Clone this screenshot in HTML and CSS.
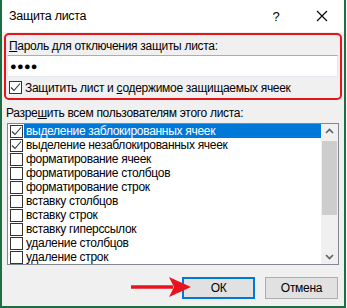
FILE: index.html
```html
<!DOCTYPE html>
<html lang="ru">
<head>
    <meta charset="UTF-8">
    <title>Защита листа</title>
    <link rel="stylesheet" href="styles.css">
</head>
<body>
    <div class="dialog">
        <div class="titlebar">
            <div class="title">Защита листа</div>
            <div class="help">?</div>
            <div class="close">
                <svg width="12" height="12" viewBox="0 0 12 12"><path d="M1 1L11 11M11 1L1 11" stroke="#000" stroke-width="1.1" fill="none"/></svg>
            </div>
        </div>

        <div class="content">
            <div class="protect-box">
                <div class="label"><u>П</u>ароль для отключения защиты листа:</div>
                <div class="password">&#9679;&#9679;&#9679;&#9679;</div>
                <div class="check-row">
                    <span class="box checked"><svg width="13" height="13" viewBox="0 0 13 13"><path d="M2 6.5L5 9.5L11 2.5" stroke="#333" stroke-width="1.1" fill="none"/></svg></span>
                    <span>Защитить лист и <u>с</u>одержимое защищаемых ячеек</span>
                </div>
            </div>

            <div class="label allow">Разре<u>ш</u>ить всем пользователям этого листа:</div>

            <div class="list">
                <div class="items">
                    <div class="item selected">
                        <span class="box"><svg width="13" height="13" viewBox="0 0 13 13"><path d="M2 6.5L5 9.5L11 2.5" stroke="#333" stroke-width="1.1" fill="none"/></svg></span>
                        <span class="text">выделение заблокированных ячеек</span>
                    </div>
                    <div class="item">
                        <span class="box"><svg width="13" height="13" viewBox="0 0 13 13"><path d="M2 6.5L5 9.5L11 2.5" stroke="#333" stroke-width="1.1" fill="none"/></svg></span>
                        <span class="text">выделение незаблокированных ячеек</span>
                    </div>
                    <div class="item"><span class="box"></span><span class="text">форматирование ячеек</span></div>
                    <div class="item"><span class="box"></span><span class="text">форматирование столбцов</span></div>
                    <div class="item"><span class="box"></span><span class="text">форматирование строк</span></div>
                    <div class="item"><span class="box"></span><span class="text">вставку столбцов</span></div>
                    <div class="item"><span class="box"></span><span class="text">вставку строк</span></div>
                    <div class="item"><span class="box"></span><span class="text">вставку гиперссылок</span></div>
                    <div class="item"><span class="box"></span><span class="text">удаление столбцов</span></div>
                    <div class="item"><span class="box"></span><span class="text">удаление строк</span></div>
                </div>
                <div class="scrollbar">
                    <svg class="arrow" width="17" height="14" viewBox="0 0 17 14"><path d="M5 9L8.5 5.5L12 9" stroke="#606060" stroke-width="1.6" fill="none"/></svg>
                    <div class="track"><div class="thumb"></div></div>
                    <svg class="arrow" width="17" height="14" viewBox="0 0 17 14"><path d="M5 5L8.5 8.5L12 5" stroke="#606060" stroke-width="1.6" fill="none"/></svg>
                </div>
            </div>

            <div class="buttons">
                <button class="btn default">ОК</button>
                <button class="btn">Отмена</button>
            </div>
        </div>

        <svg class="pointer" width="62" height="22" viewBox="0 0 62 22">
            <path d="M0 11H42" stroke="#e8141c" stroke-width="3.5"/>
            <path d="M38 1L60 11L38 21L43 11Z" fill="#e8141c"/>
        </svg>
    </div>
</body>
</html>
```

FILE: styles.css
```css
body {
    margin: 0;
    background: #fff;
    font-family: "Liberation Sans", Arial, sans-serif;
    font-size: 12px;
    letter-spacing: -0.3px;
    color: #000;
}

.dialog {
    position: relative;
    width: 346px;
    height: 308px;
    box-sizing: border-box;
    border-left: 2px solid #1d6f42;
    border-right: 2px solid #1d6f42;
    border-bottom: 2px solid #1d6f42;
    background: #f0f0f0;
    display: flex;
    flex-direction: column;
}

.titlebar {
    height: 32px;
    background: #fff;
    display: flex;
    align-items: center;
    flex-shrink: 0;
}

.title {
    flex: 1;
    padding-left: 7px;
    font-size: 12.5px;
}

.help {
    width: 20px;
    text-align: center;
    font-size: 13px;
    margin-right: 30px;
}

.close {
    width: 12px;
    height: 12px;
    margin-right: 16px;
}

.content {
    flex: 1;
    display: flex;
    flex-direction: column;
    padding: 1px 2px 0 2px;
}

.protect-box {
    border: 2px solid #e8141c;
    border-radius: 5px;
    padding: 2px 1px 0 1px;
    height: 61px;
}

.label {
    line-height: 18px;
    padding-left: 2px;
    white-space: nowrap;
}

.password {
    height: 22px;
    box-sizing: border-box;
    border: 1px solid #7a7a7a;
    border-color: #abadb3 #e3e9ef #e3e9ef #e3e9ef;
    background: #fff;
    margin-right: 1px;
    font-size: 11px;
    letter-spacing: 0.3px;
    line-height: 20px;
    padding-left: 2px;
}

.check-row {
    display: flex;
    align-items: center;
    height: 21px;
    padding-left: 2px;
    gap: 3px;
    white-space: nowrap;
}

.box {
    width: 13px;
    height: 13px;
    box-sizing: border-box;
    border: 1px solid #333;
    background: #fff;
    flex-shrink: 0;
    position: relative;
}

.box svg {
    position: absolute;
    left: -1px;
    top: -1px;
}

.allow {
    padding-top: 4px;
    margin-bottom: 1px;
}

.list {
    margin: 0 3px 0 3px;
    height: 142px;
    box-sizing: border-box;
    border: 1px solid #828790;
    background: #fff;
    display: flex;
    overflow: hidden;
}

.items {
    flex: 1;
    overflow: hidden;
}

.item {
    display: flex;
    align-items: center;
    height: 14px;
    padding-left: 2px;
    white-space: nowrap;
}

.item .text {
    flex: 1;
    padding-left: 3px;
    line-height: 14px;
}

.item.selected .text {
    background: #0078d7;
    color: #fff;
    margin-left: 1px;
    padding-left: 2px;
}

.scrollbar {
    width: 17px;
    background: #f0f0f0;
    display: flex;
    flex-direction: column;
}

.arrow {
    display: block;
    flex-shrink: 0;
}

.track {
    flex: 1;
    padding: 3px 1px 0 1px;
}

.thumb {
    height: 74px;
    background: #cdcdcd;
}

.buttons {
    display: flex;
    justify-content: flex-end;
    gap: 10px;
    padding: 12px 4px 0 0;
}

.btn {
    width: 73px;
    height: 22px;
    box-sizing: border-box;
    border: 1px solid #adadad;
    background: #e1e1e1;
    font-family: "Liberation Sans", Arial, sans-serif;
    font-size: 12px;
    letter-spacing: -0.3px;
    color: #000;
    padding: 0;
}

.btn.default {
    border: 2px solid #0078d7;
}

.pointer {
    position: absolute;
    left: 129px;
    top: 276px;
}
```
